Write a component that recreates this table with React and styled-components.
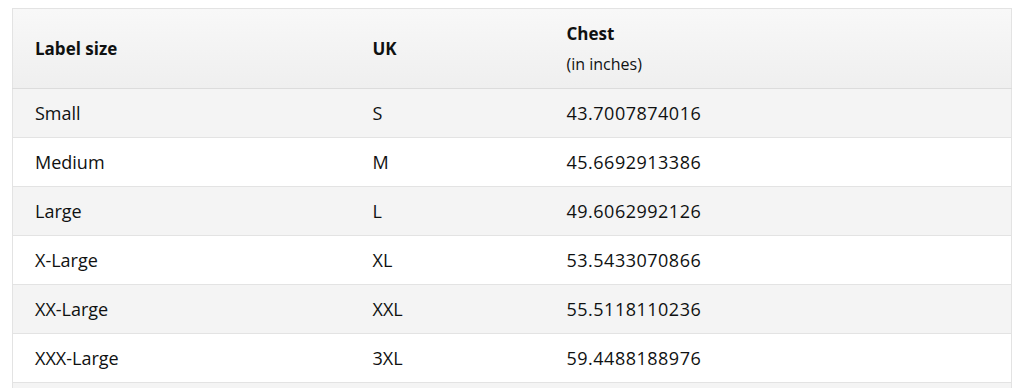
import React from "react";
import styled, { createGlobalStyle } from "styled-components";

const GlobalStyle = createGlobalStyle`
  html, body {
    margin: 0;
    padding: 0;
    background: #fff;
    overflow: hidden;
  }
  body {
    font-family: "Open Sans", "Liberation Sans", sans-serif;
    color: #0f1111;
  }
`;

const Page = styled.div`
  padding: 8px 12px 0 12px;
  width: 1000px;
`;

const Table = styled.table`
  width: 100%;
  border-collapse: collapse;
  table-layout: fixed;
  border: 1px solid #e3e3e3;
`;

const Col = styled.col`
  width: ${(p) => p.$w}px;
`;

const HeadRow = styled.tr`
  height: 80px;
  background: linear-gradient(to bottom, #f8f8f8, #efefef);
  border-bottom: 1px solid #dcdcdc;
`;

const HeadCell = styled.th`
  text-align: left;
  vertical-align: middle;
  padding: 0 22px;
  font-size: 17px;
  font-weight: 700;
  line-height: 24px;
`;

const SubLabel = styled.div`
  font-weight: 400;
  font-size: 16px;
  margin-top: 6px;
`;

const Row = styled.tr`
  height: 49px;
  background: ${(p) => (p.$shaded ? "#f4f4f4" : "#ffffff")};
  border-bottom: 1px solid #e3e3e3;
`;

const Cell = styled.td`
  padding: 0 22px;
  font-size: 18px;
  line-height: 24px;
  vertical-align: middle;
  letter-spacing: ${(p) => (p.$num ? "0.5px" : "0")};
`;

const rows = [
  ["Small", "S", "43.7007874016"],
  ["Medium", "M", "45.6692913386"],
  ["Large", "L", "49.6062992126"],
  ["X-Large", "XL", "53.5433070866"],
  ["XX-Large", "XXL", "55.5118110236"],
  ["XXX-Large", "3XL", "59.4488188976"],
  ["", "", ""],
];

export default function App() {
  return (
    <>
      <GlobalStyle />
      <Page>
        <Table>
          <colgroup>
            <Col $w={338} />
            <Col $w={194} />
            <col />
          </colgroup>
          <thead>
            <HeadRow>
              <HeadCell>Label size</HeadCell>
              <HeadCell>UK</HeadCell>
              <HeadCell>
                Chest
                <SubLabel>(in inches)</SubLabel>
              </HeadCell>
            </HeadRow>
          </thead>
          <tbody>
            {rows.map((r, i) => (
              <Row key={i} $shaded={i % 2 === 0}>
                <Cell>{r[0]}</Cell>
                <Cell>{r[1]}</Cell>
                <Cell $num>{r[2]}</Cell>
              </Row>
            ))}
          </tbody>
        </Table>
      </Page>
    </>
  );
}
